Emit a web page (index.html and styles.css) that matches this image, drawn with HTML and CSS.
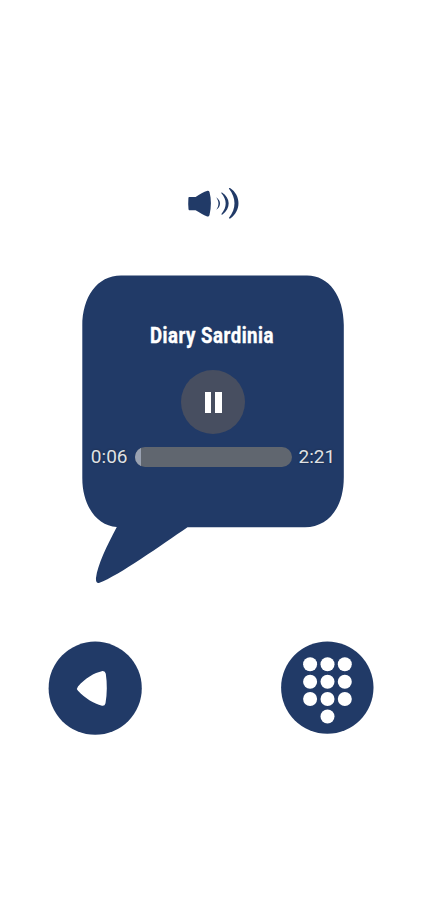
FILE: index.html
```html
<!DOCTYPE html>
<html lang="en">
<head>
<meta charset="utf-8">
<meta name="viewport" content="width=device-width, initial-scale=1">
<title>Diary Sardinia</title>
<link rel="stylesheet" href="styles.css">
</head>
<body>
<main class="player">
  <svg class="speaker" viewBox="0 0 52 34" aria-hidden="true">
    <path d="M2.200 10.900H8.600C12.900 8.400 16.500 5.500 20.600 4.800Q22.100 4.700 22.500 5.900C24.400 13.200 24.400 20.700 22.500 28.900Q22 31 20.200 30.500C16.200 29.400 12.900 26.300 8.600 24.300H2.400Q1.600 24.300 1.500 23.100Q1 17.700 1.400 12.100Q1.400 11 2.200 10.900Z"/>
    <path d="M29.200 11.200C34.300 14.700 34.300 20.300 29.200 23.800C32.200 19.400 32.200 15.700 29.200 11.200Z"/>
    <path d="M35 6.500C43.700 12.200 44 22.300 35.500 28.500Q34.400 29 34.400 28C40.200 21 40.100 14.100 34.200 7.100Q34 6.200 35 6.500Z"/>
    <path d="M43 2C54.200 9.300 54.300 24.900 43.300 32.500Q41.800 32.900 42 31.800C49.300 22.300 49.300 12 42 2.700Q41.700 1.700 43 2Z"/>
  </svg>

  <section class="bubble">
    <svg class="bubble-shape" viewBox="0 0 262 310" aria-hidden="true">
      <path d="M39 .4H225C247 .4 261.800 21 261.800 50V202C261.800 233 246 252.200 223 252.200H105.500C80 269.500 36 301 17.500 307.700Q13.500 308.800 14 303C15.500 290 25 270.500 34.800 252C15 250.800 .3 231 .3 203V51C.3 22 15 .4 39 .4Z"/>
    </svg>
    <h1 class="title">
      <svg class="title-line" viewBox="0 0 142 30">
        <text x="9" y="22.500" textLength="124" lengthAdjust="spacingAndGlyphs">Diary Sardinia</text>
      </svg>
    </h1>
    <button class="pause" aria-label="Pause"><span></span><span></span></button>
    <div class="timeline">
      <span class="time">0:06</span>
      <div class="track"><div class="elapsed"></div></div>
      <span class="time">2:21</span>
    </div>
  </section>

  <nav class="controls">
    <button class="round" aria-label="Back">
      <svg viewBox="0 0 94 94">
        <circle cx="47.200" cy="47.200" r="46.600"/>
        <path class="mark" d="M30 45.500C37 37.500 46 32 54.500 30.100Q57.200 29.900 57.800 32.700C59.200 42 59.200 53 57.500 62.200Q56.800 65.200 54 64.700C46 62.700 36.500 57 29.800 49.500Q28.200 47.500 30 45.500Z"/>
      </svg>
    </button>
    <button class="round" aria-label="Keypad">
      <svg viewBox="0 0 94 94">
        <circle cx="47.300" cy="46.600" r="46.200"/>
        <g class="mark">
          <circle cx="30.100" cy="23.300" r="7"/><circle cx="47.500" cy="23.300" r="7"/><circle cx="64.800" cy="23.300" r="7"/>
          <circle cx="30.100" cy="40.800" r="7"/><circle cx="47.500" cy="40.800" r="7"/><circle cx="64.800" cy="40.800" r="7"/>
          <circle cx="30.100" cy="58" r="7"/><circle cx="47.500" cy="58" r="7"/><circle cx="64.800" cy="58" r="7"/>
          <circle cx="47.500" cy="75.500" r="7"/>
        </g>
      </svg>
    </button>
  </nav>
</main>
</body>
</html>
```
FILE: styles.css
```css
* { box-sizing: border-box; }

body {
  margin: 0;
  background: #fff;
  font-family: Roboto, sans-serif;
}

.player {
  display: flex;
  flex-direction: column;
  align-items: center;
  width: 425px;
  height: 920px;
  padding-top: 186px;
}

svg { display: block; fill: #213a67; }

button {
  padding: 0;
  border: 0;
  background: none;
}

.speaker {
  width: 52px;
  height: 34px;
}

.bubble {
  position: relative;
  display: flex;
  flex-direction: column;
  align-items: center;
  width: 262px;
  height: 310px;
  margin: 55px 0 0 1px;
  padding-top: 45px;
}

.bubble-shape {
  position: absolute;
  inset: 0;
  z-index: -1;
  width: 262px;
  height: 310px;
}

.title { margin: 0 0 0 -2px; }

.title-line {
  width: 142px;
  height: 30px;
  overflow: visible;
  fill: #fff;
  stroke: #fff;
  stroke-width: .4px;
  font: 700 21.500px Roboto, sans-serif;
  letter-spacing: .6px;
}

.pause {
  display: flex;
  align-items: center;
  justify-content: center;
  gap: 4px;
  width: 64px;
  height: 64px;
  margin-top: 20px;
  border-radius: 50%;
  background: #474e60;
}

.pause span {
  width: 6.500px;
  height: 21px;
  background: #fff;
}

.timeline {
  display: flex;
  align-items: center;
  gap: 7px;
  margin-top: 12px;
}

.time {
  color: #dfe1e6;
  font-size: 19px;
  line-height: 22px;
  text-shadow: 0 0 2px #1b2435;
}

.track {
  width: 157px;
  height: 20px;
  overflow: hidden;
  border-radius: 10px;
  background: #60666f;
}

.elapsed {
  width: 6px;
  height: 100%;
  background: #99a1b1;
}

.controls {
  display: flex;
  justify-content: space-between;
  width: 326px;
  margin: 56px 0 0 -3px;
}

.round {
  width: 94px;
  height: 94px;
}

.round svg { width: 94px; height: 94px; }

.round .mark { fill: #fff; }
```
